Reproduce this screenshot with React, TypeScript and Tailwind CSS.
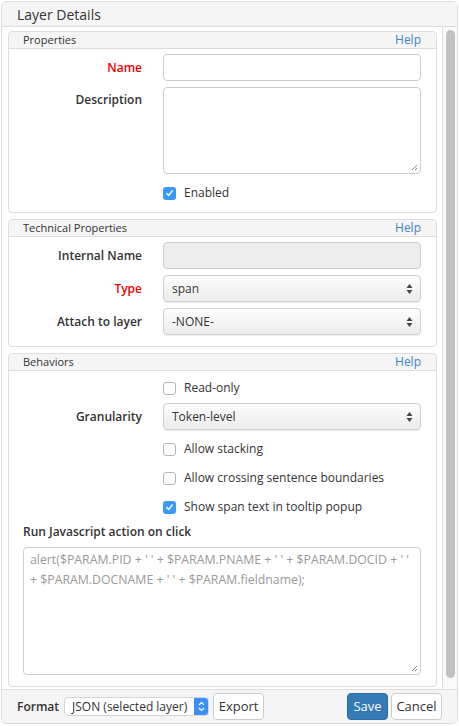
import React from 'react';

const font = { fontFamily: '"Open Sans", "Liberation Sans", sans-serif' };

function Check({ checked }: { checked?: boolean }) {
  if (checked) {
    return (
      <span className="flex h-[13px] w-[13px] items-center justify-center rounded-[3px] bg-[#3b99fc]">
        <svg width="9" height="9" viewBox="0 0 9 9">
          <path d="M1.8 4.6 L3.7 6.6 L7.2 1.8" fill="none" stroke="white" strokeWidth="1.4" strokeLinecap="round" strokeLinejoin="round" />
        </svg>
      </span>
    );
  }
  return <span className="h-[13px] w-[13px] rounded-[3px] border border-[#b5b5b5] bg-white" />;
}

function UpDown() {
  return (
    <svg width="7" height="12" viewBox="0 0 7 12">
      <path d="M3.5 1 L6.5 5 L0.5 5 Z" fill="#444" />
      <path d="M3.5 11 L6.5 7 L0.5 7 Z" fill="#444" />
    </svg>
  );
}

function Select({ value }: { value: string }) {
  return (
    <div className="flex h-[27px] items-center justify-between rounded-[4px] border border-[#cfcfcf] bg-gradient-to-b from-[#fdfdfd] to-[#ececec] pl-[8px] pr-[7px] text-[12px] text-[#333] shadow-[0_1px_1px_rgba(0,0,0,0.08)]">
      <span>{value}</span>
      <UpDown />
    </div>
  );
}

function Grip() {
  return (
    <svg className="absolute bottom-[2px] right-[2px]" width="8" height="8" viewBox="0 0 8 8">
      <path d="M7 2 L2 7 M7 5 L5 7" stroke="#888" strokeWidth="1" />
    </svg>
  );
}

function Section({ title, children, className }: { title: string; children: React.ReactNode; className?: string }) {
  return (
    <div className="rounded-[4px] border border-[#dddddd] bg-white">
      <div className="flex h-[17px] items-center justify-between rounded-t-[4px] border-b border-[#dddddd] bg-[#f5f5f5] pl-[14px] pr-[15px] text-[11px] text-[#333]">
        <span>{title}</span>
        <span className="text-[12px] text-[#4184c4]">Help</span>
      </div>
      <div className={className}>{children}</div>
    </div>
  );
}

function Row({ label, red, top, children }: { label?: string; red?: boolean; top?: boolean; children: React.ReactNode }) {
  return (
    <div className={`grid grid-cols-[125px_258px] gap-x-[21px] ${top ? 'items-start' : 'items-center'}`}>
      <div className={`text-right text-[12px] font-semibold leading-[18px] ${top ? 'pt-[4px]' : ''} ${red ? 'text-[#ee0000]' : 'text-[#333]'}`}>{label}</div>
      {children}
    </div>
  );
}

function CheckRow({ label, checked, className }: { label: string; checked?: boolean; className?: string }) {
  return (
    <div className={`grid grid-cols-[125px_258px] gap-x-[21px] ${className ?? ''}`}>
      <div />
      <div className="flex h-[18px] items-center gap-[8px] text-[12px] leading-[18px] text-[#333]">
        <Check checked={checked} />
        <span>{label}</span>
      </div>
    </div>
  );
}

export default function App() {
  return (
    <div style={font} className="h-[726px] w-[459px] bg-white p-[1px]">
      <div className="flex h-[723px] flex-col overflow-hidden rounded-[5px] border border-[#dddddd] bg-white">
        <div className="flex h-[25px] shrink-0 items-center border-b border-[#dddddd] bg-[#f5f5f5] pl-[15px] text-[14px] text-[#333]">
          Layer Details
        </div>
        <div className="flex h-[662px] shrink-0">
          <div className="flex min-w-0 flex-1 flex-col gap-[6px] pl-[6px] pr-[5px] pt-[4px]">
            <Section title="Properties" className="pb-[10px] pl-[8px] pt-[5px]">
              <Row label="Name" red>
                <div className="h-[27px] rounded-[4px] border border-[#cccccc] bg-white" />
              </Row>
              <div className="mt-[6px]">
                <Row label="Description" top>
                  <div className="relative h-[87px] rounded-[4px] border border-[#cccccc] bg-white">
                    <Grip />
                  </div>
                </Row>
              </div>
              <CheckRow label="Enabled" checked className="mt-[10px]" />
            </Section>

            <Section title="Technical Properties" className="pb-[11px] pl-[8px] pt-[5px]">
              <Row label="Internal Name">
                <div className="h-[27px] rounded-[4px] border border-[#cccccc] bg-[#eeeeee]" />
              </Row>
              <div className="mt-[6px]">
                <Row label="Type" red>
                  <Select value="span" />
                </Row>
              </div>
              <div className="mt-[6px]">
                <Row label="Attach to layer">
                  <Select value="-NONE-" />
                </Row>
              </div>
            </Section>

            <Section title="Behaviors" className="pb-[11px] pl-[8px] pt-[8px]">
              <CheckRow label="Read-only" />
              <div className="mt-[6px]">
                <Row label="Granularity">
                  <Select value="Token-level" />
                </Row>
              </div>
              <CheckRow label="Allow stacking" className="mt-[10px]" />
              <CheckRow label="Allow crossing sentence boundaries" className="mt-[11px]" />
              <CheckRow label="Show span text in tooltip popup" checked className="mt-[11px]" />
              <div className="mt-[7px] pl-[6px] text-[12px] font-semibold leading-[18px] text-[#333]">Run Javascript action on click</div>
              <div className="relative ml-[6px] mr-[15px] mt-[6px] h-[128px] rounded-[4px] border border-[#cccccc] bg-white px-[6px] pt-[2px] text-[12.3px] leading-[20px] text-[#999]">
                <div className="whitespace-nowrap">alert($PARAM.PID + ' ' + $PARAM.PNAME + ' ' + $PARAM.DOCID + ' '</div>
                <div className="whitespace-nowrap">+ $PARAM.DOCNAME + ' ' + $PARAM.fieldname);</div>
                <Grip />
              </div>
            </Section>
          </div>
          <div className="flex w-[15px] shrink-0 justify-center border-l border-[#dddddd] bg-[#fafafa] pt-[3px]">
            <div className="h-[648px] w-[9px] rounded-full bg-[#c2c2c2]" />
          </div>
        </div>
        <div className="flex flex-1 items-center border-t border-[#dddddd] bg-[#f5f5f5] pl-[15px] pr-[15px] text-[12px] text-[#333]">
          <span className="font-semibold">Format</span>
          <div className="ml-[5px] flex h-[19px] w-[145px] items-stretch overflow-hidden rounded-[4px] border border-[#d5d5d5] bg-white">
            <span className="flex flex-1 items-center pl-[7px] text-[12px]">JSON (selected layer)</span>
            <span className="flex w-[14px] items-center justify-center bg-[#3b8ff7]">
              <svg width="7" height="11" viewBox="0 0 7 11">
                <path d="M1 4 L3.5 1.5 L6 4 M1 7 L3.5 9.5 L6 7" fill="none" stroke="white" strokeWidth="1.2" />
              </svg>
            </span>
          </div>
          <div className="ml-[4px] flex h-[27px] w-[51px] items-center justify-center rounded-[4px] border border-[#cccccc] bg-white text-[13px]">Export</div>
          <div className="ml-auto flex h-[27px] w-[41px] items-center justify-center rounded-[4px] border border-[#2e6da4] bg-[#337ab7] text-[13px] text-white">Save</div>
          <div className="ml-[3px] flex h-[27px] w-[51px] items-center justify-center rounded-[4px] border border-[#cccccc] bg-white text-[13px]">Cancel</div>
        </div>
      </div>
    </div>
  );
}
